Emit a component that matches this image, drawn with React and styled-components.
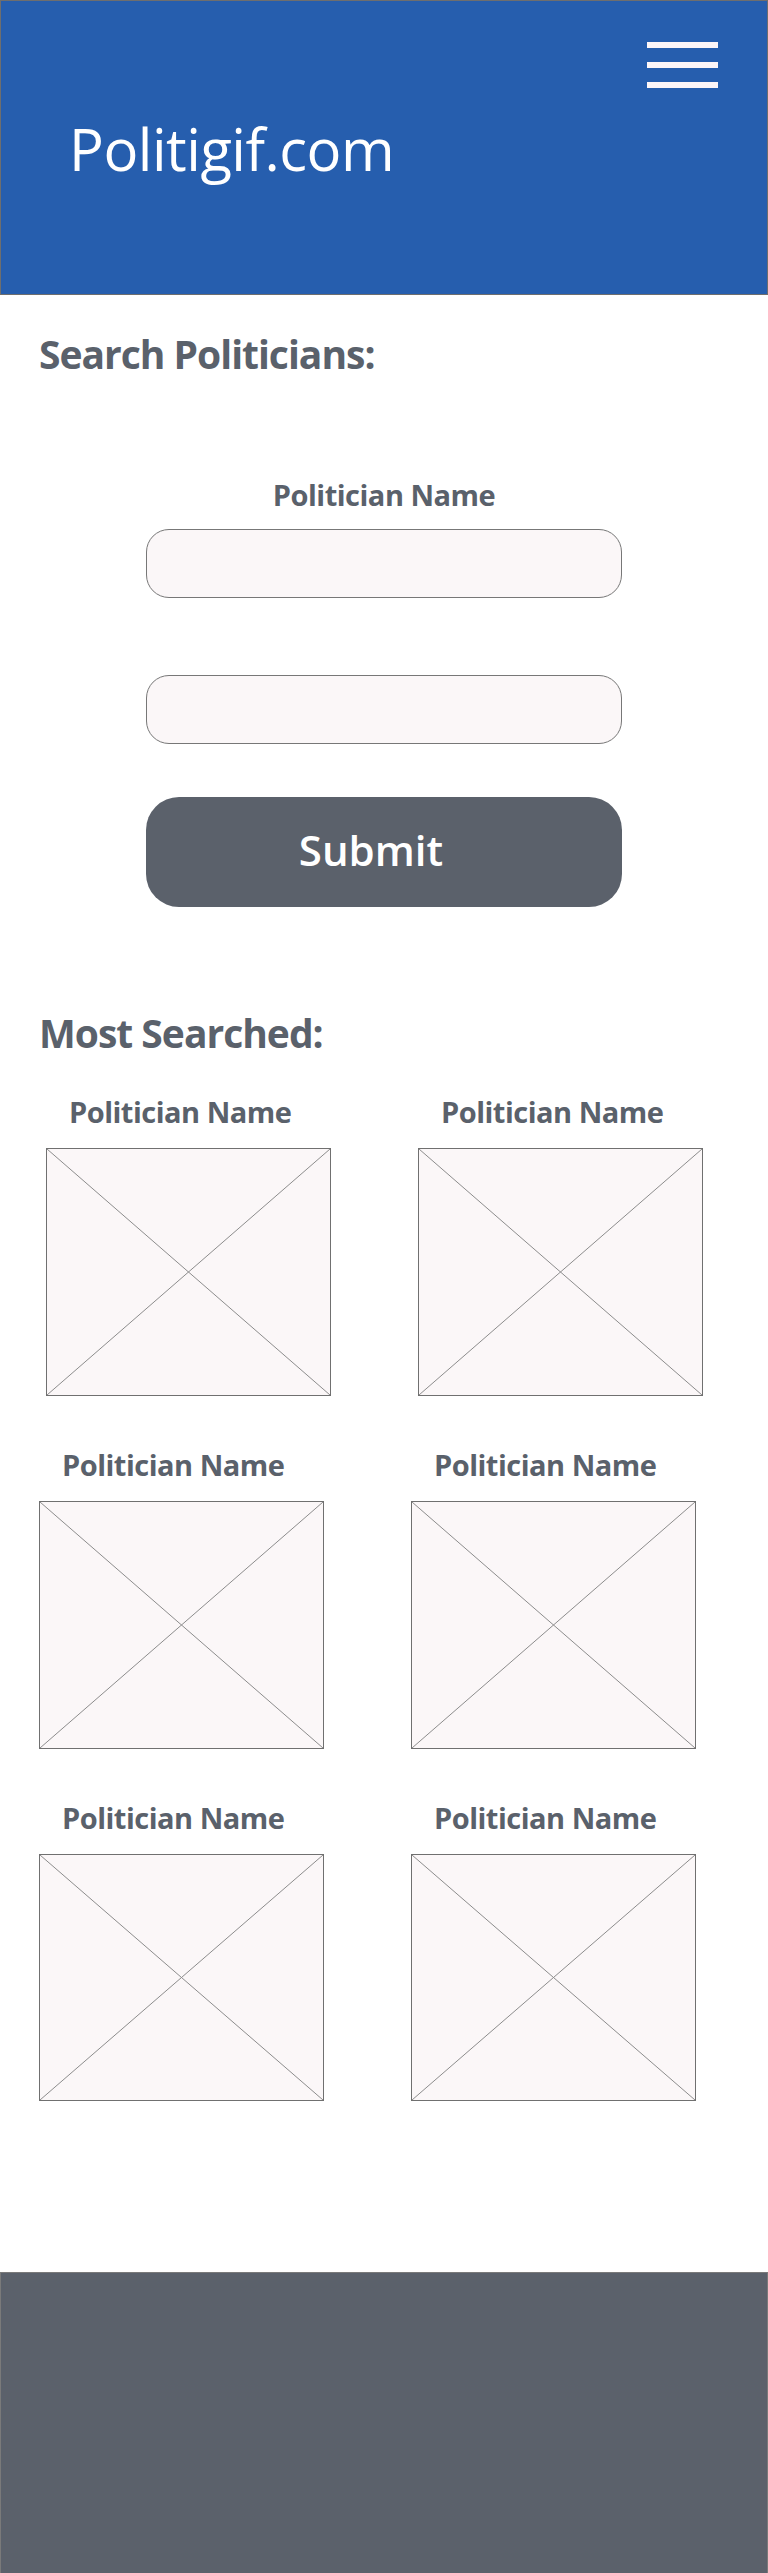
import styled, { createGlobalStyle } from "styled-components";

const GlobalStyle = createGlobalStyle`
  html, body {
    margin: 0;
    padding: 0;
    background: #ffffff;
  }
  body {
    font-family: "Open Sans", "Noto Sans", sans-serif;
  }
`;

const Page = styled.div`
  width: 768px;
  min-height: 2573px;
  display: flex;
  flex-direction: column;
`;

const Header = styled.header`
  box-sizing: border-box;
  height: 295px;
  background-color: #265eae;
  border: 1px solid #6e6e6e;
  display: flex;
  flex-direction: column;
`;

const MenuRow = styled.div`
  display: flex;
  justify-content: flex-end;
  padding: 41px 49px 0 0;
`;

const Burger = styled.div`
  display: flex;
  flex-direction: column;
  gap: 14px;
  span {
    display: block;
    width: 71px;
    height: 6px;
    background-color: #fdf6f8;
  }
`;

const Logo = styled.h1`
  margin: 32px 0 0 68px;
  font-size: 58px;
  line-height: 1;
  font-weight: 400;
  letter-spacing: -0.5px;
  color: #ffffff;
`;

const Main = styled.main`
  flex: 1;
  display: flex;
  flex-direction: column;
  padding: 39px 0 0 0;
`;

const Heading = styled.h2`
  margin: ${(p) => p.gap || 0}px 0 0 39px;
  font-size: 39px;
  line-height: 1;
  font-weight: 700;
  letter-spacing: -1px;
  color: #5a616b;
`;

const Form = styled.form`
  display: flex;
  flex-direction: column;
  align-items: center;
  margin-top: 107px;
`;

const Label = styled.label`
  font-size: 29px;
  line-height: 1;
  font-weight: 700;
  letter-spacing: -0.5px;
  color: #5a616b;
  margin-bottom: 20px;
`;

const Input = styled.input`
  box-sizing: border-box;
  width: 476px;
  height: 69px;
  margin-bottom: ${(p) => p.after}px;
  border: 1px solid #777777;
  border-radius: 23px;
  background-color: #fbf7f8;
  padding: 0 20px;
  font-size: 24px;
  outline: none;
`;

const Submit = styled.button`
  width: 476px;
  height: 110px;
  border: none;
  border-radius: 33px;
  background-color: #5b616b;
  color: #ffffff;
  font-family: "Open Sans", "Noto Sans", sans-serif;
  font-size: 42px;
  font-weight: 600;
  padding: 0 26px 6px 0;
  cursor: pointer;
`;

const Grid = styled.div`
  display: flex;
  flex-direction: column;
  gap: 54px;
  margin-top: 45px;
`;

const Row = styled.div`
  display: flex;
  gap: 87px;
  padding-left: ${(p) => p.offset}px;
`;

const Card = styled.div`
  display: flex;
  flex-direction: column;
  width: 285px;
`;

const CardName = styled.div`
  font-size: 29px;
  line-height: 1;
  font-weight: 700;
  letter-spacing: -0.5px;
  color: #5a616b;
  padding-left: 23px;
  margin-bottom: 22px;
`;

const Placeholder = styled.div`
  box-sizing: border-box;
  height: ${(p) => p.h}px;
  border: 1px solid #707070;
  background-color: #fbf7f8;
  svg {
    display: block;
    width: 100%;
    height: 100%;
  }
`;

const Footer = styled.footer`
  box-sizing: border-box;
  height: 302px;
  margin-top: 171px;
  background-color: #5b616b;
  border: 1px solid #7a7a7a;
`;

function ImageBox({ h }) {
  return (
    <Placeholder h={h}>
      <svg viewBox="0 0 100 100" preserveAspectRatio="none">
        <line x1="0" y1="0" x2="100" y2="100" stroke="#8c8c8c" strokeWidth="1" vectorEffect="non-scaling-stroke" />
        <line x1="100" y1="0" x2="0" y2="100" stroke="#8c8c8c" strokeWidth="1" vectorEffect="non-scaling-stroke" />
      </svg>
    </Placeholder>
  );
}

const rows = [
  { offset: 46, h: 248 },
  { offset: 39, h: 248 },
  { offset: 39, h: 247 },
];

export default function App() {
  return (
    <Page>
      <GlobalStyle />
      <Header>
        <MenuRow>
          <Burger>
            <span />
            <span />
            <span />
          </Burger>
        </MenuRow>
        <Logo>Politigif.com</Logo>
      </Header>
      <Main>
        <Heading>Search Politicians:</Heading>
        <Form onSubmit={(e) => e.preventDefault()}>
          <Label>Politician Name</Label>
          <Input after={77} />
          <Input after={53} />
          <Submit type="submit">Submit</Submit>
        </Form>
        <Heading gap={106}>Most Searched:</Heading>
        <Grid>
          {rows.map((r, i) => (
            <Row key={i} offset={r.offset}>
              <Card>
                <CardName>Politician Name</CardName>
                <ImageBox h={r.h} />
              </Card>
              <Card>
                <CardName>Politician Name</CardName>
                <ImageBox h={r.h} />
              </Card>
            </Row>
          ))}
        </Grid>
      </Main>
      <Footer />
    </Page>
  );
}
